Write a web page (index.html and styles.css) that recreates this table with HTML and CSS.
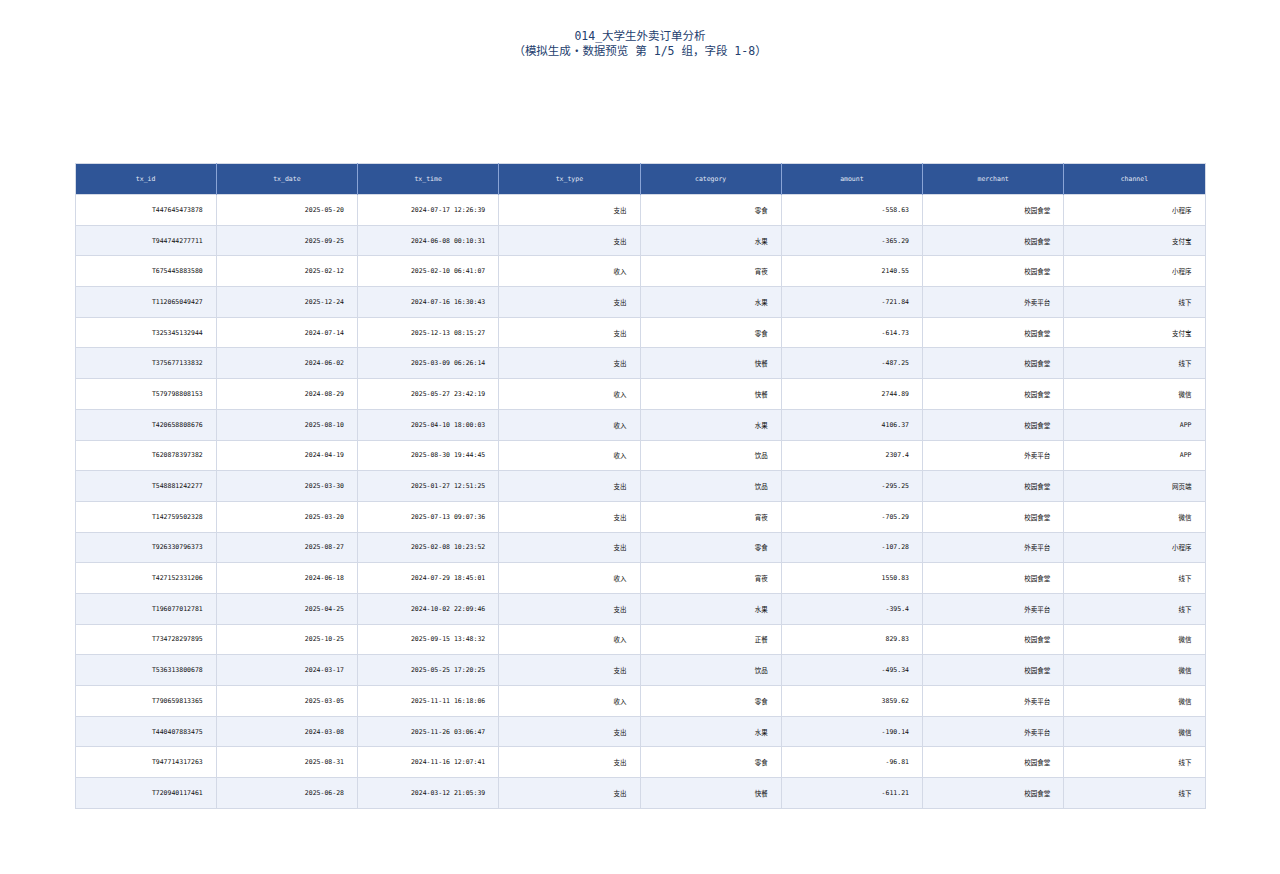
FILE: index.html
```html
<!DOCTYPE html>
<html lang="zh">
<head>
<meta charset="utf-8">
<title>014_大学生外卖订单分析</title>
<link rel="stylesheet" href="styles.css">
</head>
<body>
<div class="page">
  <header class="title">
    <div class="title-line">014_大学生外卖订单分析</div>
    <div class="title-line"><span class="cjk paren">（</span>模拟生成<span class="cjk">·</span>数据预览 第 1/5 组<span class="cjk">，</span>字段 1-8<span class="cjk paren">）</span></div>
  </header>
  <table class="grid">
    <thead>
      <tr><th>tx_id</th><th>tx_date</th><th>tx_time</th><th>tx_type</th><th>category</th><th>amount</th><th>merchant</th><th>channel</th></tr>
    </thead>
    <tbody>
      <tr><td>T447645473878</td><td>2025-05-20</td><td>2024-07-17 12:26:39</td><td>支出</td><td>零食</td><td>-558.63</td><td>校园食堂</td><td>小程序</td></tr>
      <tr><td>T944744277711</td><td>2025-09-25</td><td>2024-06-08 00:10:31</td><td>支出</td><td>水果</td><td>-365.29</td><td>校园食堂</td><td>支付宝</td></tr>
      <tr><td>T675445883580</td><td>2025-02-12</td><td>2025-02-10 06:41:07</td><td>收入</td><td>宵夜</td><td>2140.55</td><td>校园食堂</td><td>小程序</td></tr>
      <tr><td>T112065049427</td><td>2025-12-24</td><td>2024-07-16 16:30:43</td><td>支出</td><td>水果</td><td>-721.84</td><td>外卖平台</td><td>线下</td></tr>
      <tr><td>T325345132944</td><td>2024-07-14</td><td>2025-12-13 08:15:27</td><td>支出</td><td>零食</td><td>-614.73</td><td>校园食堂</td><td>支付宝</td></tr>
      <tr><td>T375677133832</td><td>2024-06-02</td><td>2025-03-09 06:26:14</td><td>支出</td><td>快餐</td><td>-487.25</td><td>校园食堂</td><td>线下</td></tr>
      <tr><td>T579798808153</td><td>2024-08-29</td><td>2025-05-27 23:42:19</td><td>收入</td><td>快餐</td><td>2744.89</td><td>校园食堂</td><td>微信</td></tr>
      <tr><td>T420658808676</td><td>2025-08-10</td><td>2025-04-10 18:00:03</td><td>收入</td><td>水果</td><td>4106.37</td><td>校园食堂</td><td>APP</td></tr>
      <tr><td>T620878397382</td><td>2024-04-19</td><td>2025-08-30 19:44:45</td><td>收入</td><td>饮品</td><td>2307.4</td><td>外卖平台</td><td>APP</td></tr>
      <tr><td>T548881242277</td><td>2025-03-30</td><td>2025-01-27 12:51:25</td><td>支出</td><td>饮品</td><td>-295.25</td><td>校园食堂</td><td>网页端</td></tr>
      <tr><td>T142759502328</td><td>2025-03-20</td><td>2025-07-13 09:07:36</td><td>支出</td><td>宵夜</td><td>-705.29</td><td>校园食堂</td><td>微信</td></tr>
      <tr><td>T926330796373</td><td>2025-08-27</td><td>2025-02-08 10:23:52</td><td>支出</td><td>零食</td><td>-107.28</td><td>外卖平台</td><td>小程序</td></tr>
      <tr><td>T427152331206</td><td>2024-06-18</td><td>2024-07-29 18:45:01</td><td>收入</td><td>宵夜</td><td>1550.83</td><td>校园食堂</td><td>线下</td></tr>
      <tr><td>T196077012781</td><td>2025-04-25</td><td>2024-10-02 22:09:46</td><td>支出</td><td>水果</td><td>-395.4</td><td>外卖平台</td><td>线下</td></tr>
      <tr><td>T734728297895</td><td>2025-10-25</td><td>2025-09-15 13:48:32</td><td>收入</td><td>正餐</td><td>829.83</td><td>校园食堂</td><td>微信</td></tr>
      <tr><td>T536313800678</td><td>2024-03-17</td><td>2025-05-25 17:20:25</td><td>支出</td><td>饮品</td><td>-495.34</td><td>校园食堂</td><td>微信</td></tr>
      <tr><td>T790659813365</td><td>2025-03-05</td><td>2025-11-11 16:18:06</td><td>收入</td><td>零食</td><td>3859.62</td><td>外卖平台</td><td>微信</td></tr>
      <tr><td>T440407883475</td><td>2024-03-08</td><td>2025-11-26 03:06:47</td><td>支出</td><td>水果</td><td>-190.14</td><td>外卖平台</td><td>微信</td></tr>
      <tr><td>T947714317263</td><td>2025-08-31</td><td>2024-11-16 12:07:41</td><td>支出</td><td>零食</td><td>-96.81</td><td>校园食堂</td><td>线下</td></tr>
      <tr><td>T720940117461</td><td>2025-06-28</td><td>2024-03-12 21:05:39</td><td>支出</td><td>快餐</td><td>-611.21</td><td>校园食堂</td><td>线下</td></tr>
    </tbody>
  </table>
</div>
</body>
</html>
```

FILE: styles.css
```css
html, body {
  margin: 0;
  padding: 0;
  background: #ffffff;
}

.page {
  width: 1280px;
  height: 874px;
  display: flex;
  flex-direction: column;
  align-items: center;
  font-family: "DejaVu Sans Mono", "Noto Sans CJK SC", monospace;
}

.title {
  margin-top: 29px;
  text-align: center;
  color: #24406e;
  font-size: 11.5px;
  line-height: 14px;
}

.title-line {
  height: 14px;
}

.cjk {
  font-family: "Noto Sans CJK SC", sans-serif;
  line-height: 14px;
}

.paren {
  font-family: "Noto Sans CJK TC", sans-serif;
}

.grid {
  margin-top: 106px;
  width: 1131px;
  border-collapse: collapse;
  table-layout: fixed;
  font-size: 6.5px;
  color: #111111;
  border: 1px solid #d3d9e6;
}

.grid th {
  height: 30px;
  background: #2f5597;
  color: #e3e9f5;
  font-weight: normal;
  text-align: center;
  border-left: 1px solid #8aa4d6;
  padding: 0;
}

.grid th:first-child {
  border-left: none;
}

.grid td {
  height: 29.7px;
  padding: 0 13px 0 0;
  text-align: right;
  border: 1px solid #d3d9e6;
}

.grid tbody tr:nth-child(even) td {
  background: #eef2fa;
}
```
